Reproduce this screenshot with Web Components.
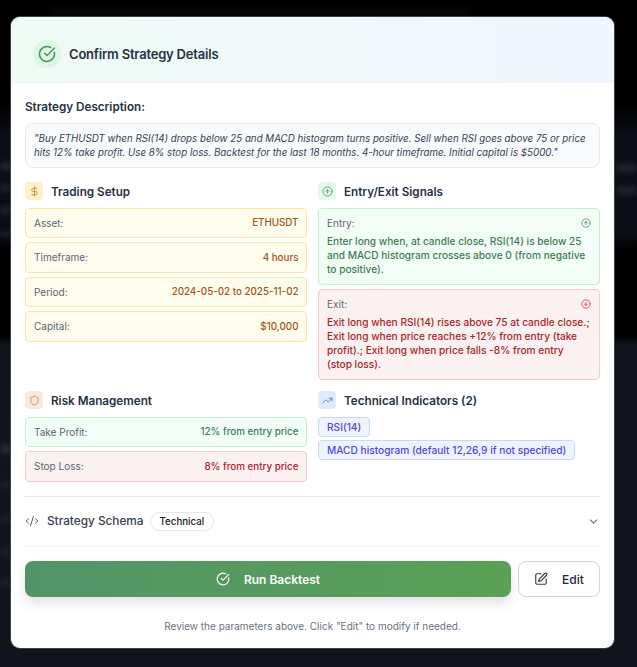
<!DOCTYPE html>
<html><head><meta charset="utf-8"><style>
html,body{margin:0;height:100%}
body{background:#000;font-family:Inter,"Liberation Sans",sans-serif;overflow:hidden;width:637px;height:667px}
</style></head><body>
<page-backdrop></page-backdrop>
<confirm-modal>
  <strategy-description>"Buy ETHUSDT when RSI(14) drops below 25 and MACD histogram turns positive. Sell when RSI goes above 75 or price hits 12% take profit. Use 8% stop loss. Backtest for the last 18 months. 4-hour timeframe. Initial capital is $5000."</strategy-description>
  <div style="display:grid;grid-template-columns:282px 282px;column-gap:11px;row-gap:11px">
    <detail-section title="Trading Setup" icon="dollar">
      <info-row tone="amber" label="Asset:" value="ETHUSDT"></info-row>
      <info-row tone="amber" label="Timeframe:" value="4 hours"></info-row>
      <info-row tone="amber" label="Period:" value="2024-05-02 to 2025-11-02"></info-row>
      <info-row tone="amber" label="Capital:" value="$10,000"></info-row>
    </detail-section>
    <detail-section title="Entry/Exit Signals" icon="up">
      <signal-box tone="green" label="Entry:">Enter long when, at candle close, RSI(14) is below 25 and MACD histogram crosses above 0 (from negative to positive).</signal-box>
      <signal-box tone="red" label="Exit:">Exit long when RSI(14) rises above 75 at candle close.; Exit long when price reaches +12% from entry (take profit).; Exit long when price falls -8% from entry (stop loss).</signal-box>
    </detail-section>
    <detail-section title="Risk Management" icon="shield">
      <info-row tone="green" label="Take Profit:" value="12% from entry price"></info-row>
      <info-row tone="red" label="Stop Loss:" value="8% from entry price"></info-row>
    </detail-section>
    <detail-section title="Technical Indicators (2)" icon="trend">
      <indicator-chip>RSI(14)</indicator-chip>
      <indicator-chip>MACD histogram (default 12,26,9 if not specified)</indicator-chip>
    </detail-section>
  </div>
  <schema-row></schema-row>
  <action-bar></action-bar>
</confirm-modal>
<script>
const I={
 check:'<path d="M21.8 10A10 10 0 1 1 17 3.34"/><path d="m9 11 3 3L22 4"/>',
 dollar:'<line x1="12" x2="12" y1="2" y2="22"/><path d="M17 5H9.5a3.5 3.5 0 0 0 0 7h5a3.5 3.5 0 0 1 0 7H6"/>',
 up:'<circle cx="12" cy="12" r="10"/><path d="m16 12-4-4-4 4"/><path d="M12 16V8"/>',
 down:'<circle cx="12" cy="12" r="10"/><path d="M12 8v8"/><path d="m8 12 4 4 4-4"/>',
 shield:'<path d="M20 13c0 5-3.5 7.5-7.66 8.95a1 1 0 0 1-.67-.01C7.5 20.5 4 18 4 13V6a1 1 0 0 1 1-1c2 0 4.5-1.2 6.24-2.72a1.17 1.17 0 0 1 1.52 0C14.51 3.81 17 5 19 5a1 1 0 0 1 1 1z"/>',
 trend:'<polyline points="22 7 13.5 15.5 8.5 10.5 2 17"/><polyline points="16 7 22 7 22 13"/>',
 code:'<path d="m18 16 4-4-4-4"/><path d="m6 8-4 4 4 4"/><path d="m14.5 4-5 16"/>',
 chev:'<path d="m6 9 6 6 6-6"/>',
 edit:'<path d="M12 3H5a2 2 0 0 0-2 2v14a2 2 0 0 0 2 2h14a2 2 0 0 0 2-2v-7"/><path d="M18.375 2.625a1 1 0 0 1 3 3l-9.013 9.014a2 2 0 0 1-.853.505l-2.873.84a.5.5 0 0 1-.62-.62l.84-2.873a2 2 0 0 1 .506-.852z"/>'
};
const svg=(n,s,c,w=2)=>`<svg xmlns="http://www.w3.org/2000/svg" width="${s}" height="${s}" viewBox="0 0 24 24" fill="none" stroke="${c}" stroke-width="${w}" stroke-linecap="round" stroke-linejoin="round" style="display:block;flex:none">${I[n]}</svg>`;
const T={amber:{bg:'#fefcec',bd:'#f7e7a0',fg:'#a3541e'},green:{bg:'#f2fdf6',bd:'#c3f0d0',fg:'#3f7d55'},red:{bg:'#fbf1f0',bd:'#f3caca',fg:'#a8272d'}};
function def(name,render){customElements.define(name,class extends HTMLElement{connectedCallback(){if(this.shadowRoot)return;this.attachShadow({mode:'open'}).innerHTML=render(this)}})}
def('page-backdrop',()=>{
 const b=(x,y,w,h,o)=>`<i style="left:${x}px;top:${y}px;width:${w}px;height:${h}px;opacity:${o}"></i>`;
 return `<style>
:host{display:block;position:absolute;inset:0;overflow:hidden;background:linear-gradient(180deg,#000 0,#000 100px,#0a0d14 135px,#0a0d14 235px,#000 250px,#000 335px,#11141c 345px,#11141c 100%)}
i{position:absolute;background:#8a8f98;filter:blur(3px);display:block}
</style>${b(50,9,420,5,.1)}${b(0,163,12,6,.28)}${b(0,185,12,6,.2)}${b(0,207,12,6,.22)}${b(0,231,12,6,.14)}${b(0,446,12,6,.3)}${b(0,482,12,6,.12)}${b(0,516,12,6,.12)}${b(0,549,12,6,.12)}${b(0,580,12,6,.14)}${b(616,165,21,6,.24)}${b(616,187,21,7,.2)}`});
def('confirm-modal',()=>`<style>
:host{display:block;position:absolute;left:11px;top:17px;width:603px;height:631px;background:#fff;border-radius:9px;overflow:hidden;box-shadow:0 0 0 1px #3a4050}
.h{border-bottom:1px solid #f1f5f9;background:linear-gradient(90deg,#effbf5,#f1f5fe);display:flex;align-items:center;gap:8px;padding:8px 22px 0;box-sizing:border-box;height:66px}
.c{width:28px;height:28px;border-radius:50%;background:#dcf7e4;display:flex;align-items:center;justify-content:center}
h2{margin:0;font-size:13px;letter-spacing:-.2px;font-weight:600;color:#263244}
.b{padding:0 14px}
</style><div class="h"><div class="c">${svg('check',18,'#4d8f62')}</div><h2>Confirm Strategy Details</h2></div><div class="b"><slot></slot></div>`);
def('strategy-description',()=>`<style>
:host{display:block;padding-top:17px;margin-bottom:14px}
.l{font-size:11.7px;font-weight:600;color:#263244;line-height:15px;margin-bottom:8px}
.d{background:#f8fafc;border:1px solid #e5e7eb;border-radius:8px;padding:7.5px 8px;font-size:9.75px;line-height:14px;font-style:italic;color:#374151}
</style><div class="l">Strategy Description:</div><div class="d"><slot></slot></div>`);
def('detail-section',e=>{const k=e.getAttribute('icon');const m={dollar:['#fdf1c9','#cf8a3c'],up:['#e3f9e9','#5ba374'],shield:['#fbeadb','#dd8455'],trend:['#e0e9fd','#5b7ddb']}[k];
return `<style>
:host{display:block;min-width:0}
.t{display:flex;align-items:center;gap:8px;height:18px;margin-bottom:7.5px}
.i{width:18px;height:18px;border-radius:4px;background:${m[0]};display:flex;align-items:center;justify-content:center}
.n{font-size:11.7px;font-weight:600;color:#263244;padding-top:1px}
.s{display:flex;flex-direction:column;gap:4px;align-items:stretch}
</style><div class="t"><div class="i">${svg(k,11,m[1])}</div><div class="n">${e.getAttribute('title')}</div></div><div class="s"><slot></slot></div>`});
def('info-row',e=>{const t=T[e.getAttribute('tone')];return `<style>
:host{display:flex;justify-content:space-between;align-items:center;height:30.5px;box-sizing:border-box;padding:0 7.5px 0 8px;background:${t.bg};border:1px solid ${t.bd};border-radius:4px;font-size:10px}
.l{color:#5b6472}.v{color:${t.fg};font-weight:500;font-size:9.8px}
</style><span class="l">${e.getAttribute('label')}</span><span class="v">${e.getAttribute('value')}</span>`});
def('signal-box',e=>{const k=e.getAttribute('tone'),t=T[k];return `<style>
:host{display:block;box-sizing:border-box;padding:7px 8px 8px;background:${t.bg};border:1px solid ${t.bd};border-radius:4px;font-size:10.15px;line-height:14px;${k=='red'?'margin-top:.5px;':''}}
.r{display:flex;justify-content:space-between;align-items:center;color:#5b6472;margin-bottom:4px;font-size:10px}
.x{color:${t.fg};font-weight:500}
</style><div class="r"><span>${e.getAttribute('label')}</span>${svg(k=='green'?'up':'down',10,k=='green'?'#4d9a62':'#c9454b')}</div><div class="x"><slot></slot></div>`});
def('indicator-chip',()=>`<style>
:host{display:block;width:fit-content;box-sizing:border-box;height:20px;line-height:18px;padding:0 8px;margin-bottom:-1px;background:#eef4ff;border:1px solid #c6d8f8;border-radius:4px;font-size:10.17px;color:#5147d6;font-weight:500}
</style><slot></slot>`);
def('schema-row',()=>`<style>
:host{display:flex;align-items:center;height:49px;margin-top:14px;border-top:1px solid #e5e7eb;border-bottom:1px solid #f1f5f9;box-sizing:content-box;gap:8px}
.n{font-size:11.8px;font-weight:500;color:#374151;margin-right:-2px}
.p{height:19px;line-height:17px;box-sizing:border-box;padding:0 9px;border:1px solid #e5e7eb;border-radius:10px;font-size:9.7px;font-weight:500;color:#111827}
.e{margin-left:auto}
</style>${svg('code',14,'#4b5563',1.7)}<span class="n">Strategy Schema</span><span class="p">Technical</span><span class="e">${svg('chev',13,'#6b7280')}</span>`);
def('action-bar',()=>`<style>
:host{display:block;padding-top:14px}
.r{display:flex;gap:7px}
.r span{padding-top:1px}
.go{flex:none;width:486px;height:36px;border-radius:8px;background:linear-gradient(90deg,#529468,#5aa055);color:#fff;display:flex;align-items:center;justify-content:center;gap:14px;font-size:12px;font-weight:600;box-shadow:0 6px 12px rgba(0,0,0,.12)}
.ed{flex:1;height:36px;box-sizing:border-box;border:1px solid #d1d5db;border-radius:8px;display:flex;align-items:center;justify-content:center;gap:14px;font-size:12px;font-weight:500;color:#1e293b}
.f{text-align:center;font-size:10px;color:#6b7280;margin-top:22px;line-height:14px}
</style><div class="r"><div class="go">${svg('check',14,'#fff')}<span>Run Backtest</span></div><div class="ed">${svg('edit',14,'#374151')}<span>Edit</span></div></div><div class="f">Review the parameters above. Click "Edit" to modify if needed.</div>`);
</script>
</body></html>
